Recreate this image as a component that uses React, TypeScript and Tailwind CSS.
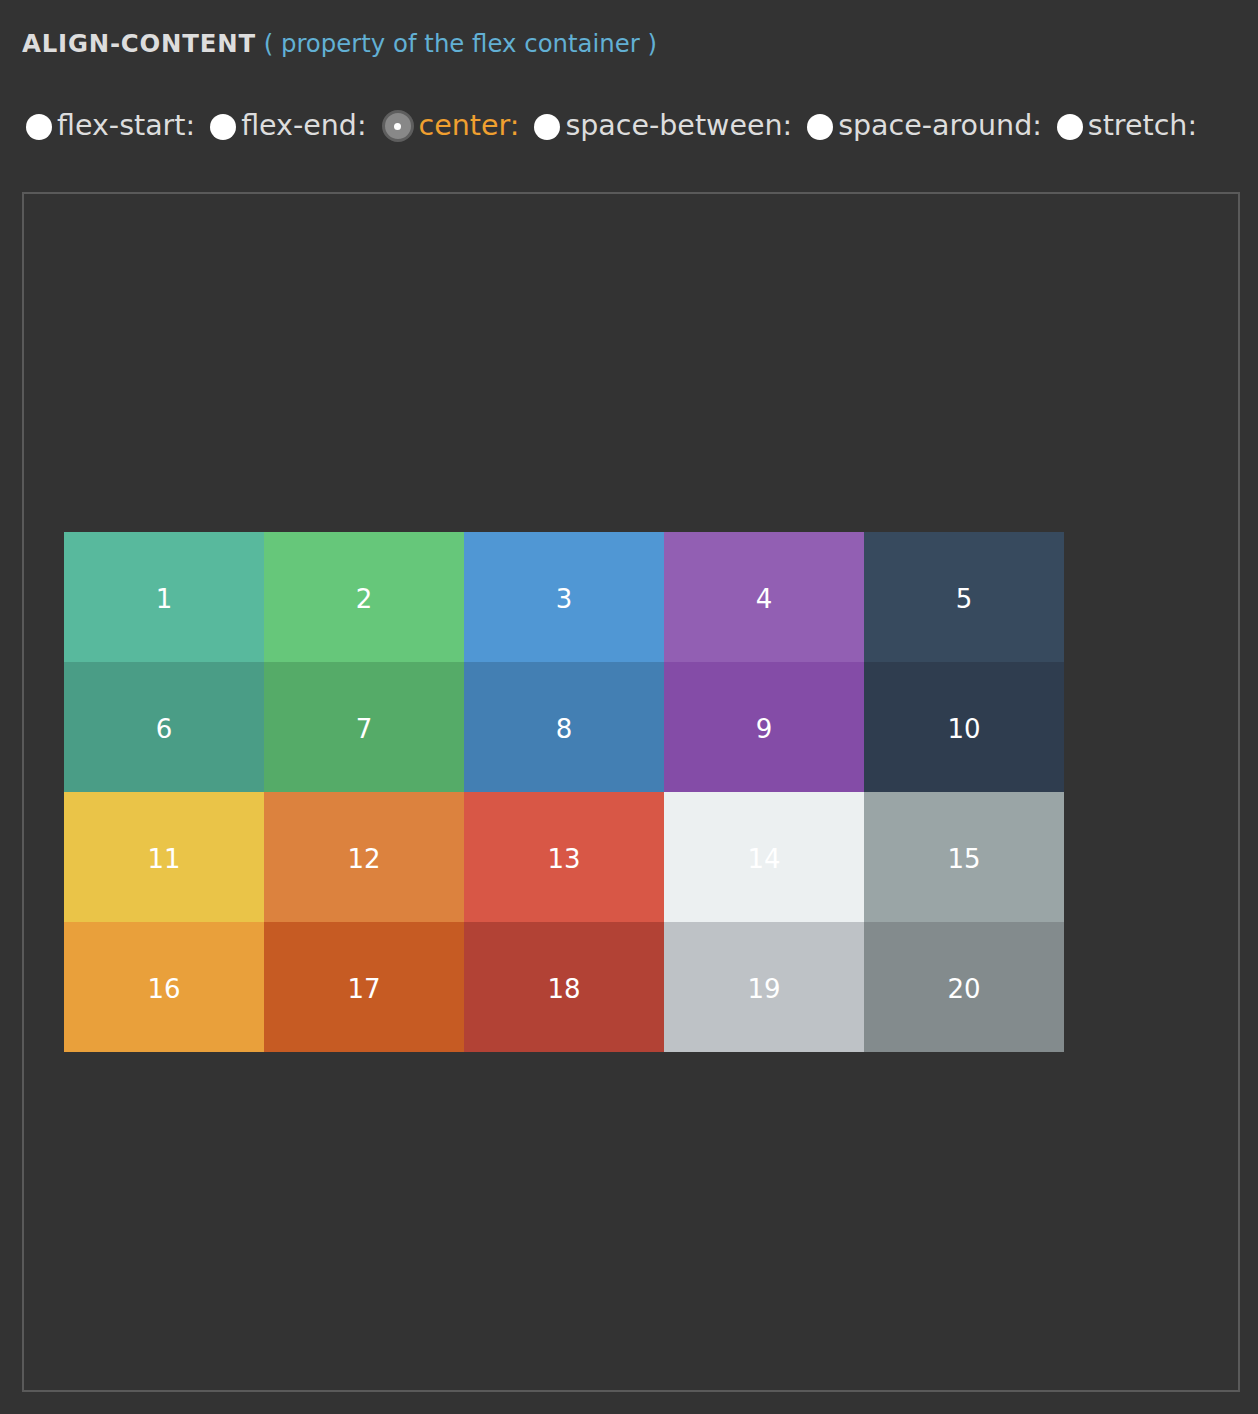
const options = ["flex-start", "flex-end", "center", "space-between", "space-around", "stretch"];

const colors = [
  "bg-[#58b99d]", "bg-[#66c77a]", "bg-[#5097d4]", "bg-[#925fb3]", "bg-[#374a5e]",
  "bg-[#4a9d86]", "bg-[#55ab68]", "bg-[#437fb3]", "bg-[#844ca7]", "bg-[#2f3d4f]",
  "bg-[#eac448]", "bg-[#dc823e]", "bg-[#d85746]", "bg-[#ecf0f1]", "bg-[#9aa5a6]",
  "bg-[#e9a03b]", "bg-[#c65b23]", "bg-[#b24235]", "bg-[#bec2c6]", "bg-[#838b8d]",
];

export default function App() {
  const selected = "center";

  return (
    <div className="min-h-[1414px] bg-[#333333] px-[22px] pt-[28px] font-['DejaVu_Sans',Verdana,sans-serif]">
      <h1 className="text-[24.4px] leading-[32px]">
        <span className="font-bold tracking-[0.8px] text-[#dddddd]">ALIGN-CONTENT</span>{" "}
        <span className="text-[#62b0d4]">( property of the flex container )</span>
      </h1>

      <div className="mt-[49px] flex items-center text-[28.5px] leading-[34px]">
        {options.map((opt) => {
          const on = opt === selected;
          return (
            <label key={opt} className="mr-[11px] flex items-center">
              {on ? (
                <span className="ml-[4px] flex h-[32px] w-[32px] items-center justify-center rounded-full border-[3px] border-[#5e5e5e] bg-[#888888]">
                  <span className="h-[7px] w-[7px] rounded-full bg-white" />
                </span>
              ) : (
                <span className="ml-[4px] mt-[2px] h-[26px] w-[26px] rounded-full bg-white" />
              )}
              <span className={on ? "ml-[5px] text-[#f0a030]" : "ml-[5px] text-[#dddddd]"}>{opt}:</span>
            </label>
          );
        })}
      </div>

      <div className="mt-[49px] flex h-[1200px] w-[1218px] flex-wrap content-center border-2 border-[#5a5a5a] p-[40px]">
        {colors.map((c, i) => (
          <div
            key={i}
            className={`flex h-[130px] w-[200px] items-center justify-center pt-[4px] text-[26px] text-white ${c}`}
          >
            {i + 1}
          </div>
        ))}
      </div>
    </div>
  );
}
